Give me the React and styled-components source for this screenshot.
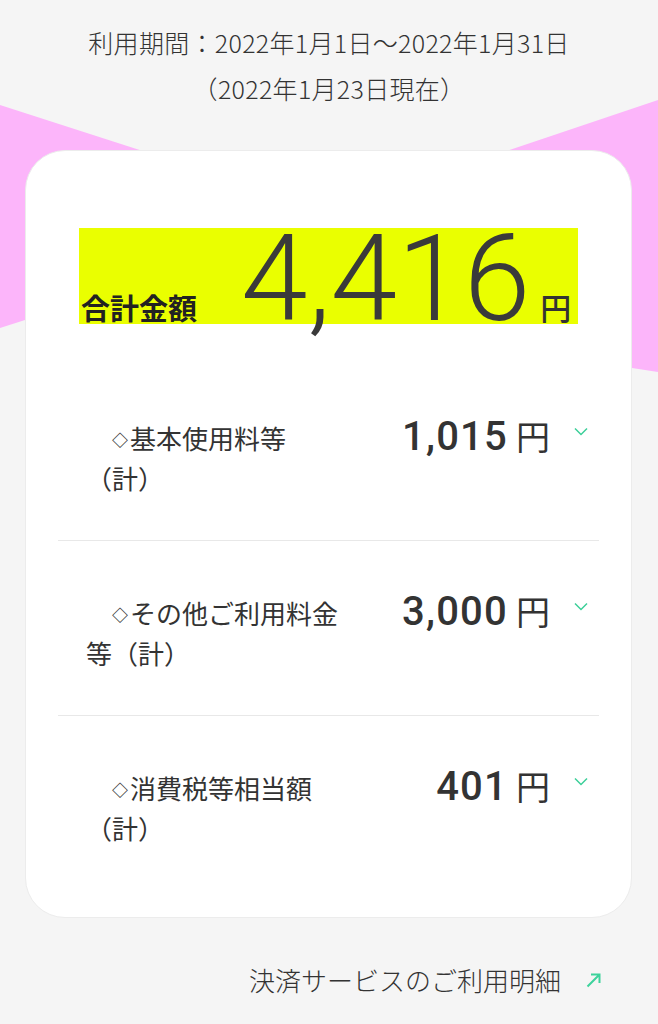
import React from "react";
import styled, { createGlobalStyle } from "styled-components";

const GlobalStyle = createGlobalStyle`
  html, body { margin: 0; padding: 0; background: #f5f5f5; }
  body {
    font-family: "Noto Sans CJK JP", "Noto Sans", sans-serif;
    color: #333;
  }
`;

const Page = styled.div`
  position: relative;
  width: 658px;
  min-height: 1024px;
  overflow: hidden;
  background: #f5f5f5;
`;

const Decoration = styled.svg`
  position: absolute;
  left: 0;
  top: 0;
  width: 658px;
  height: 400px;
  z-index: 0;
`;

const Header = styled.header`
  position: relative;
  z-index: 1;
  padding-top: 19px;
  text-align: center;
  font-size: 25px;
  font-weight: 300;
  letter-spacing: 0.3px;
  line-height: 46px;
  color: #333;
`;

const HeaderLine = styled.div``;

const Card = styled.section`
  position: relative;
  z-index: 1;
  margin: 39px 26px 0 25px;
  background: #fff;
  border: 1px solid #ececec;
  border-radius: 40px;
  padding: 77px 32px 26px 32px;
`;

const Highlight = styled.div`
  display: flex;
  align-items: baseline;
  box-sizing: border-box;
  width: 499px;
  height: 96px;
  margin: 0 auto;
  padding-left: 2px;
  background: #eaff00;
`;

const TotalLabel = styled.span`
  font-size: 29px;
  font-weight: 700;
  line-height: 40px;
  color: #222;
`;

const TotalValue = styled.span`
  font-family: Roboto, "Liberation Sans", sans-serif;
  font-size: 120px;
  font-weight: 300;
  line-height: 102px;
  margin-left: 44px;
  color: #3a3a3a;
`;

const TotalYen = styled.span`
  font-size: 31px;
  font-weight: 500;
  line-height: 32px;
  margin-left: 10px;
  color: #333;
`;

const Rows = styled.div`
  margin-top: 42px;
`;

const Row = styled.div`
  display: flex;
  align-items: flex-start;
  padding: 52px 11px 42px 28px;
  border-bottom: 1px solid #e8e8e8;
  &:last-child {
    border-bottom: none;
    padding-bottom: 43px;
  }
`;

const Label = styled.div`
  width: 262px;
  font-size: 26px;
  line-height: 40px;
  text-indent: 26px;
  color: #333;
  &::first-letter {
    font-size: 16px;
    font-weight: 700;
    line-height: 16px;
    margin-right: 2px;
    vertical-align: 3px;
  }
`;

const Amount = styled.div`
  margin-left: auto;
  margin-top: -2px;
  display: flex;
  align-items: baseline;
`;

const AmountNumber = styled.span`
  font-family: Roboto, "Liberation Sans", sans-serif;
  font-size: 40px;
  font-weight: 500;
  letter-spacing: 1.2px;
  line-height: 40px;
  color: #333;
`;

const AmountYen = styled.span`
  font-size: 34px;
  line-height: 40px;
  margin-left: 8px;
  color: #333;
`;

const Chevron = styled.svg`
  flex: none;
  width: 14px;
  height: 9px;
  margin-left: 24px;
  margin-top: 9px;
`;

const Footer = styled.footer`
  position: relative;
  z-index: 1;
  display: flex;
  justify-content: flex-end;
  align-items: center;
  margin-top: 40px;
  padding-right: 57px;
  font-size: 26px;
  font-weight: 300;
  line-height: 44px;
  color: #333;
`;

const ExternalIcon = styled.svg`
  width: 15px;
  height: 15px;
  margin-left: 25px;
`;

const rows = [
  { label: "◇基本使用料等（計）", value: "1,015" },
  { label: "◇その他ご利用料金等（計）", value: "3,000" },
  { label: "◇消費税等相当額（計）", value: "401" },
];

export default function App() {
  return (
    <Page>
      <GlobalStyle />
      <Decoration viewBox="0 0 658 400" aria-hidden="true">
        <polygon
          points="0,105 329,211 658,100 658,372 632,368 25,320 0,328"
          fill="#fcb5fa"
        />
      </Decoration>
      <Header>
        <HeaderLine>利用期間：2022年1月1日〜2022年1月31日</HeaderLine>
        <HeaderLine>（2022年1月23日現在）</HeaderLine>
      </Header>
      <Card>
        <Highlight>
          <TotalLabel>合計金額</TotalLabel>
          <TotalValue>4,416</TotalValue>
          <TotalYen>円</TotalYen>
        </Highlight>
        <Rows>
          {rows.map((it) => (
            <Row key={it.label}>
              <Label>{it.label}</Label>
              <Amount>
                <AmountNumber>{it.value}</AmountNumber>
                <AmountYen>円</AmountYen>
              </Amount>
              <Chevron viewBox="0 0 14 9" aria-hidden="true">
                <polyline
                  points="1,1.5 7,7.5 13,1.5"
                  fill="none"
                  stroke="#3ccf99"
                  strokeWidth="1.5"
                />
              </Chevron>
            </Row>
          ))}
        </Rows>
      </Card>
      <Footer>
        <span>決済サービスのご利用明細</span>
        <ExternalIcon viewBox="0 0 15 15" aria-hidden="true">
          <path
            d="M1.5 13.5 L13.5 1.5 M5 1.5 H13.5 V10"
            fill="none"
            stroke="#3ed39c"
            strokeWidth="2"
          />
        </ExternalIcon>
      </Footer>
    </Page>
  );
}
